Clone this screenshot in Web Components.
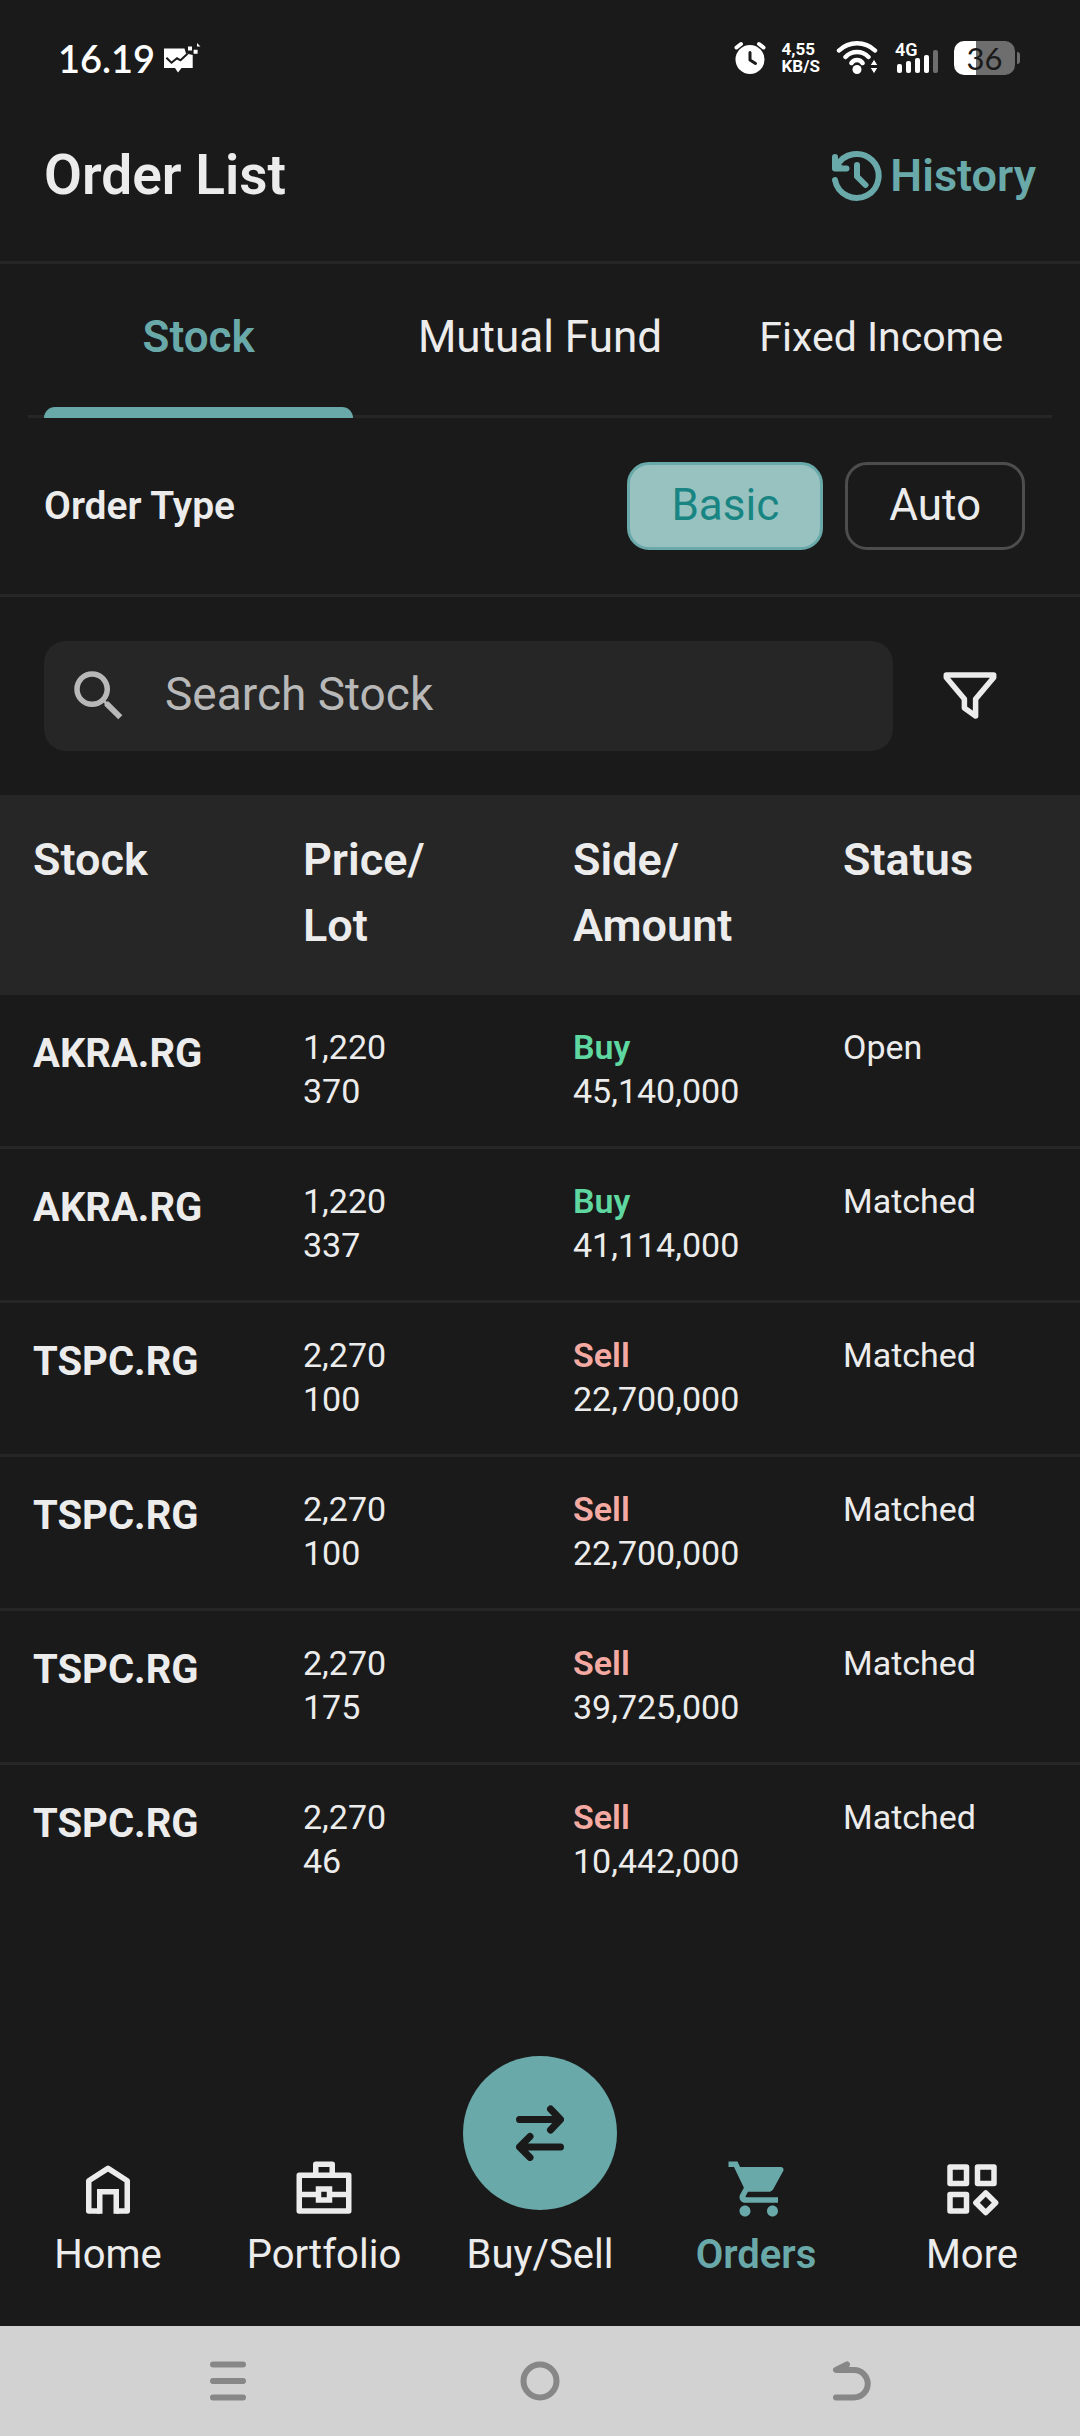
<!DOCTYPE html>
<html lang="en">
<head>
<meta charset="utf-8">
<meta name="viewport" content="width=device-width, initial-scale=1">
<title>Order List</title>
<style>
  :root {
    --bg: #1a1a1a;
    --surface: #262626;
    --line: #262626;
    --text: #ececec;
    --muted: #b8b8b8;
    --accent: #6aa9a9;
    --buy: #5fd7a0;
    --sell: #f4aaa2;
  }
  html, body { margin: 0; }
  body {
    background: var(--bg);
    color: var(--text);
    font-family: Roboto, "Liberation Sans", sans-serif;
  }
</style>
</head>
<body>
<order-app></order-app>

<template id="t-order-app">
  <style>
    :host { display: flex; flex-direction: column; min-height: 100vh; }
    main { flex: 1; }
  </style>
  <status-bar></status-bar>
  <app-header>Order List</app-header>
  <main>
    <tab-bar>
      <tab-item selected>Stock</tab-item>
      <tab-item>Mutual Fund</tab-item>
      <tab-item small>Fixed Income</tab-item>
    </tab-bar>
    <order-type>
      <span slot="label">Order Type</span>
      <choice-chip selected>Basic</choice-chip>
      <choice-chip>Auto</choice-chip>
    </order-type>
    <search-row></search-row>
    <order-table></order-table>
  </main>
  <nav-bar>
    <nav-item>
      <svg slot="icon" width="66" height="66" viewBox="0 0 24 24" fill="none" stroke="currentColor" stroke-width="2"><path stroke-linejoin="round" d="M9 20H5V9l7-4.500L19 9v11h-4"/><path d="M9 21v-8h6v8"/></svg>
      Home
    </nav-item>
    <nav-item>
      <svg slot="icon" width="66" height="66" viewBox="0 0 24 24" fill="none" stroke="currentColor" stroke-width="2"><path stroke-linejoin="round" d="M3 7h18v13H3zM9 7V3h6v4"/><path d="M3 14h7m4 0h7M10 12h4v4h-4z"/></svg>
      Portfolio
    </nav-item>
    <nav-item raised>
      <svg slot="icon" width="48" height="56" viewBox="0 0 48 56" fill="none" stroke="#1a1a1a" stroke-width="7" stroke-linecap="round" stroke-linejoin="round"><path d="M3.500 14.500H44M34.500 4L44.500 14.500 34.500 25M44.500 42H4M14 31.500L3.500 42 14 52.500"/></svg>
      Buy/Sell
    </nav-item>
    <nav-item selected>
      <svg slot="icon" width="66" height="66" viewBox="-1 0 24 24" fill="currentColor"><path d="M7 18c-1.100 0-2 .9-2 2s.9 2 2 2 2-.9 2-2-.9-2-2-2zM1 2v2h2l3.600 7.590-1.350 2.450c-.16.28-.25.61-.25.96 0 1.100.9 2 2 2h12v-2H7.420c-.14 0-.25-.11-.25-.25l.03-.12.9-1.630h7.450c.75 0 1.410-.41 1.750-1.030l3.580-6.490A1 1 0 0 0 20 4H5.210l-.94-2H1zm16 16c-1.100 0-2 .9-2 2s.9 2 2 2 2-.9 2-2-.9-2-2-2z"/></svg>
      Orders
    </nav-item>
    <nav-item>
      <svg slot="icon" width="66" height="66" viewBox="0 0 24 24" fill="none" stroke="currentColor" stroke-width="2" stroke-linejoin="round"><path d="M4 4h6v6H4zM14 4h6v6h-6zM4 14h6v6H4zM17 13.400l3.600 3.600-3.600 3.600-3.600-3.600z"/></svg>
      More
    </nav-item>
  </nav-bar>
  <system-nav></system-nav>
</template>

<template id="t-status-bar">
  <style>
    :host {
      display: flex; align-items: center; justify-content: space-between;
      box-sizing: border-box; height: 88px; padding: 28px 60px 0 58px; color: #fff;
    }
    svg { display: block; }
    .left, .right, .battery { display: flex; align-items: center; }
    .left { gap: 9px; }
    .time { font: 600 38px/44px Lato, sans-serif; }
    .right { gap: 16px; }
    .rate { display: grid; font: 700 17px/17px Roboto, sans-serif; }
    .signal { display: grid; }
    .signal > * { grid-area: 1 / 1; }
    .net { font: 600 18px/18px Roboto, sans-serif; }
    .battery { gap: 2px; }
    .cell {
      width: 61px; border-radius: 10px; text-align: center;
      background: linear-gradient(90deg, #fff 36%, #6e6e6e 36%);
      color: #1a1a1a; font: 400 31px/34px Lato, sans-serif;
    }
    .nub { width: 3px; height: 12px; border-radius: 0 3px 3px 0; background: #6e6e6e; }
  </style>
  <div class="left">
    <span class="time">16.19</span>
    <svg width="38" height="32" viewBox="0 0 38 32"><path fill="#fff" d="M0 6.500h20.500l1.500 5 6.700 1.500v13H17.500L14 30.500 11 26H0zM24 4.500h4v4h-4zM29.600 7.800h4v4h-4zM33 1l3.500 3.500H33z"/><path fill="none" stroke="#1a1a1a" stroke-width="2" d="M2.400 15.700l5.100 5 5.500-4.400 3.500 2 7-6.500"/></svg>
  </div>
  <div class="right">
    <svg width="32" height="34" viewBox="0 0 32 34"><g fill="none" stroke="#fff" stroke-width="4" stroke-linecap="round"><path d="M2.500 6.500L7 3M29.500 6.500L25 3"/></g><circle cx="16" cy="18.500" r="14.500" fill="#fff"/><path fill="none" stroke="#1a1a1a" stroke-width="3" stroke-linecap="round" stroke-linejoin="round" d="M16 11.500v7.500l5.500 3.500"/></svg>
    <div class="rate"><span>4,55</span><span>KB/S</span></div>
    <svg width="43" height="34" viewBox="0 0 43 34"><g fill="none" stroke="#fff" stroke-width="4.500" stroke-linecap="round"><path d="M3 9.500a26 26 0 0 1 36 0M9.500 16a16 16 0 0 1 23 0M15.500 22a6.500 6.500 0 0 1 11 0"/></g><circle cx="21" cy="28.500" r="4.500" fill="#fff"/><path fill="#fff" stroke="#1a1a1a" stroke-width="1" d="M34 24.500h8L38 18zM34 26.500h8L38 33z"/></svg>
    <div class="signal">
      <svg width="43" height="34" viewBox="0 0 43 34" fill="#fff"><rect x="2" y="23" width="5" height="9" rx="2"/><rect x="11" y="20" width="5" height="12" rx="2"/><rect x="20" y="17" width="5" height="15" rx="2"/><rect x="29" y="14" width="5" height="18" rx="2"/><rect x="38" y="9" width="5" height="23" rx="2" fill="#6e6e6e"/></svg>
      <span class="net">4G</span>
    </div>
    <div class="battery"><span class="cell">36</span><span class="nub"></span></div>
  </div>
</template>

<template id="t-app-header">
  <style>
    :host {
      display: flex; align-items: center; justify-content: space-between;
      padding: 54px 44px 52px; border-bottom: 3px solid var(--line);
    }
    h1 { margin: 0; font: 600 55px/67px Roboto, sans-serif; }
    a {
      display: flex; align-items: center; gap: 7px; color: var(--accent);
      font: 600 45px/52px Roboto, sans-serif; text-decoration: none;
    }
    svg { display: block; }
  </style>
  <h1><slot></slot></h1>
  <a href="#history">
    <svg width="52" height="52" viewBox="0 0 52 52" fill="none" stroke="currentColor" stroke-width="6" stroke-linecap="round" stroke-linejoin="round"><path d="M4 30a22 22 0 1 0 2-14M4 7v11.500h11.500M26 15v11.500l8.500 8.500"/><path fill="currentColor" stroke="none" d="M4 9l11 10H4z"/></svg>
    History
  </a>
</template>

<template id="t-tab-bar">
  <style>
    :host { display: block; padding: 0 28px; }
    div { display: grid; grid-template-columns: repeat(3, 1fr); border-bottom: 3px solid var(--line); }
  </style>
  <div role="tablist"><slot></slot></div>
</template>

<template id="t-tab-item">
  <style>
    :host { display: block; padding: 0 16px; margin-bottom: -3px; }
    button {
      display: block; width: 100%; padding: 47px 0 44px; border: 0; background: none; color: var(--text);
      font: 400 44px/52px Roboto, sans-serif; white-space: nowrap;
    }
    i { display: block; height: 11px; border-radius: 11px 11px 0 0; }
    :host([small]) button { font-size: 41px; }
    :host([selected]) button { color: var(--accent); font-weight: 600; }
    :host([selected]) i { background: var(--accent); }
  </style>
  <button type="button" role="tab"><slot></slot></button>
  <i></i>
</template>

<template id="t-order-type">
  <style>
    :host {
      display: flex; align-items: center; justify-content: space-between;
      padding: 44px 55px 44px 44px; border-bottom: 3px solid var(--line);
      font: 600 39px/48px Roboto, sans-serif;
    }
    div { display: flex; gap: 22px; }
  </style>
  <slot name="label"></slot>
  <div role="group" aria-label="Order Type"><slot></slot></div>
</template>

<template id="t-choice-chip">
  <style>
    :host { display: block; }
    button {
      display: block; box-sizing: border-box; height: 88px; padding: 0 41px 2px;
      border: 3px solid #4d4d4d; border-radius: 22px; background: none; color: var(--text);
      font: 400 44px/52px Roboto, sans-serif;
    }
    :host([selected]) button { background: #98c2c0; border-color: var(--accent); color: #188583; }
  </style>
  <button type="button"><slot></slot></button>
</template>

<template id="t-search-row">
  <style>
    :host { display: flex; align-items: center; gap: 33px; padding: 44px 66px 44px 44px; }
    label {
      flex: 1; display: flex; align-items: center; gap: 33px; min-width: 0;
      padding: 22px; border-radius: 22px; background: var(--surface); color: var(--muted);
    }
    svg { display: block; }
    input {
      flex: 1; min-width: 0; box-sizing: border-box; height: 66px; padding: 0 0 4px; border: 0; outline: 0; background: none;
      color: var(--text); font: 400 46px/52px Roboto, sans-serif;
    }
    input::placeholder { color: var(--muted); opacity: 1; }
    button {
      display: flex; align-items: center; justify-content: center; width: 88px; height: 88px;
      padding: 0; border: 0; background: none; color: var(--text);
    }
  </style>
  <label>
    <svg width="66" height="66" viewBox="0 0 24 24" fill="currentColor"><path d="M15.500 14h-.79l-.28-.27A6.470 6.470 0 0 0 16 9.500 6.500 6.500 0 1 0 9.500 16c1.610 0 3.090-.59 4.230-1.570l.27.28v.79l5 4.990L20.490 19l-4.990-5zm-6 0C7.010 14 5 11.990 5 9.500S7.010 5 9.500 5 14 7.010 14 9.500 11.990 14 9.500 14z"/></svg>
    <input type="text" placeholder="Search Stock" aria-label="Search Stock">
  </label>
  <button type="button" aria-label="Filter">
    <svg width="54" height="48" viewBox="0 0 54 48" fill="none" stroke="currentColor" stroke-width="5.500" stroke-linejoin="round"><path d="M3.300 3h47.400v2.500L32.600 27v17L21.400 36v-9L3.300 5.500z"/></svg>
  </button>
</template>

<template id="t-order-table">
  <style>
    :host { display: block; }
    table { width: 100%; table-layout: fixed; border-collapse: collapse; }
    th, td { padding: 0 0 0 33px; text-align: left; vertical-align: top; }
    thead { background: var(--surface); }
    thead th { padding-top: 32px; padding-bottom: 36px; font: 600 45px/66px Roboto, sans-serif; }
    tbody tr { border-bottom: 3px solid var(--line); }
    tbody tr:last-child { border-bottom: 0; }
    tbody th, td { padding-top: 30px; padding-bottom: 33px; }
    tbody th { font: 700 40px/58px Roboto, sans-serif; }
    td { font: 400 34px/44px Roboto, sans-serif; }
    b { font-weight: 600; }
    .buy { color: var(--buy); }
    .sell { color: var(--sell); }
  </style>
  <table>
    <thead>
      <tr><th scope="col">Stock</th><th scope="col">Price/<br>Lot</th><th scope="col">Side/<br>Amount</th><th scope="col">Status</th></tr>
    </thead>
    <tbody></tbody>
  </table>
</template>

<template id="t-nav-bar">
  <style>
    :host { display: block; }
    nav { display: grid; grid-template-columns: repeat(5, 1fr); align-items: end; padding-bottom: 48px; }
  </style>
  <nav><slot></slot></nav>
</template>

<template id="t-nav-item">
  <style>
    :host { display: block; }
    a {
      display: flex; flex-direction: column; align-items: center; gap: 10px;
      color: var(--text); font: 400 40px/46px Roboto, sans-serif; text-decoration: none;
    }
    .icon { display: flex; align-items: center; justify-content: center; }
    :host([selected]) a { color: var(--accent); font-weight: 600; }
    :host([raised]) a { gap: 22px; }
    :host([raised]) .icon { width: 154px; height: 154px; border-radius: 50%; background: var(--accent); }
  </style>
  <a href="#"><span class="icon"><slot name="icon"></slot></span><span><slot></slot></span></a>
</template>

<template id="t-system-nav">
  <style>
    :host {
      display: grid; grid-template-columns: repeat(3, 1fr);
      padding: 0 72px; background: #d2d2d2; color: #878787;
    }
    button {
      display: flex; align-items: center; justify-content: center; height: 110px;
      padding: 0; border: 0; background: none; color: inherit;
    }
    svg { fill: none; stroke: currentColor; stroke-width: 6; stroke-linecap: round; stroke-linejoin: round; }
  </style>
  <button type="button" aria-label="Recent apps"><svg width="40" height="40" viewBox="0 0 40 40"><path d="M5 3.500h30M5 20h30M5 36.500h30"/></svg></button>
  <button type="button" aria-label="Home screen"><svg width="40" height="40" viewBox="0 0 40 40"><circle cx="20" cy="20" r="16.500"/></svg></button>
  <button type="button" aria-label="Back"><svg width="40" height="40" viewBox="0 0 40 40"><path d="M15 3.500L4 9h18a13.700 13.700 0 0 1 0 27.500H4"/></svg></button>
</template>

<script>
  class Base extends HTMLElement {
    constructor() {
      super();
      const template = document.getElementById('t-' + this.localName);
      this.attachShadow({ mode: 'open' }).append(template.content.cloneNode(true));
    }
  }

  class OrderTable extends Base {
    connectedCallback() {
      const orders = [
        ['AKRA.RG', '1,220', '370', 'Buy', '45,140,000', 'Open'],
        ['AKRA.RG', '1,220', '337', 'Buy', '41,114,000', 'Matched'],
        ['TSPC.RG', '2,270', '100', 'Sell', '22,700,000', 'Matched'],
        ['TSPC.RG', '2,270', '100', 'Sell', '22,700,000', 'Matched'],
        ['TSPC.RG', '2,270', '175', 'Sell', '39,725,000', 'Matched'],
        ['TSPC.RG', '2,270', '46', 'Sell', '10,442,000', 'Matched'],
      ];
      this.shadowRoot.querySelector('tbody').innerHTML = orders.map(
        ([code, price, lot, side, amount, status]) => `<tr>
          <th scope="row">${code}</th>
          <td>${price}<br>${lot}</td>
          <td><b class="${side.toLowerCase()}">${side}</b><br>${amount}</td>
          <td>${status}</td>
        </tr>`).join('');
    }
  }

  class TabItem extends Base {
    connectedCallback() {
      this.shadowRoot.querySelector('button').setAttribute('aria-selected', this.hasAttribute('selected'));
    }
  }

  class ChoiceChip extends Base {
    connectedCallback() {
      this.shadowRoot.querySelector('button').setAttribute('aria-pressed', this.hasAttribute('selected'));
    }
  }

  customElements.define('status-bar', class extends Base {});
  customElements.define('app-header', class extends Base {});
  customElements.define('tab-bar', class extends Base {});
  customElements.define('tab-item', TabItem);
  customElements.define('order-type', class extends Base {});
  customElements.define('choice-chip', ChoiceChip);
  customElements.define('search-row', class extends Base {});
  customElements.define('order-table', OrderTable);
  customElements.define('nav-bar', class extends Base {});
  customElements.define('nav-item', class extends Base {});
  customElements.define('system-nav', class extends Base {});
  customElements.define('order-app', class extends Base {});
</script>
</body>
</html>
